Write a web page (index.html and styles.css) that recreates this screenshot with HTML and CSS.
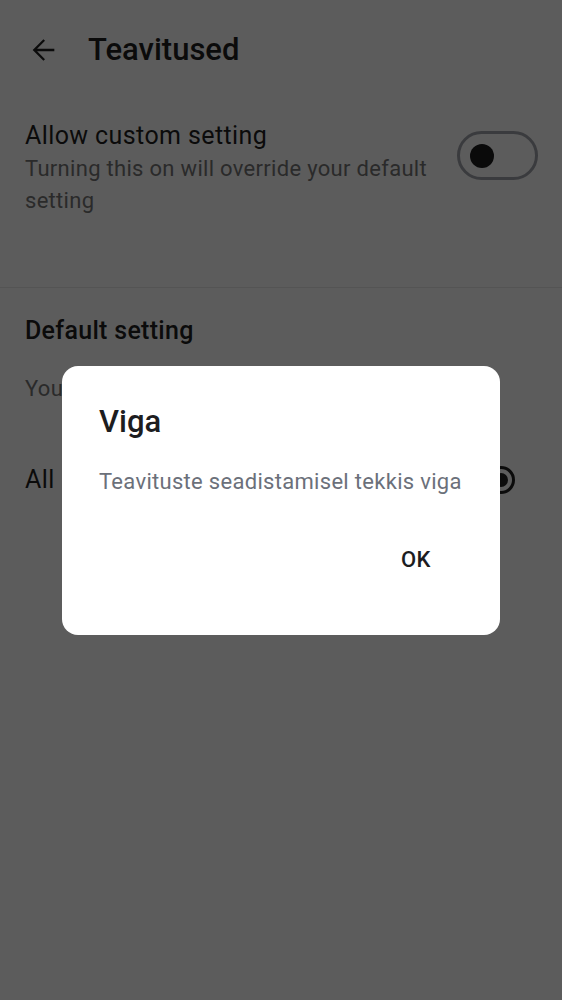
FILE: index.html
```html
<!DOCTYPE html>
<html lang="et">
<head>
<meta charset="utf-8">
<link rel="stylesheet" href="styles.css">
</head>
<body>
<div class="screen">
  <header class="topbar">
    <svg class="back" width="34" height="34" viewBox="0 0 24 24"><path d="M20 11.1H7.83l5.59-5.59L12.3 4.4 4.7 12l7.6 7.6 1.12-1.11-5.59-5.59H20v-1.8z" fill="#1f1f1f"/></svg>
    <h1 class="title">Teavitused</h1>
  </header>

  <section class="section first">
    <div class="row">
      <div class="texts">
        <div class="label">Allow custom setting</div>
        <div class="sub">Turning this on will override your default setting</div>
      </div>
      <div class="switch"><span class="thumb"></span></div>
    </div>
  </section>

  <section class="section second">
    <div class="label medium">Default setting</div>
    <div class="sub you">You will receive notifications according to this</div>
    <div class="radio-row">
      <div class="label">All notifications</div>
      <span class="radio"><span class="dot"></span></span>
    </div>
  </section>
</div>

<div class="overlay">
  <div class="dialog">
    <h2 class="dlg-title">Viga</h2>
    <p class="dlg-msg">Teavituste seadistamisel tekkis viga</p>
    <div class="actions"><button class="ok">OK</button></div>
  </div>
</div>
</body>
</html>
```

FILE: styles.css
```css
* { box-sizing: border-box; }
html, body { margin: 0; padding: 0; }
body {
  width: 562px;
  height: 1000px;
  background: #ffffff;
  font-family: Roboto, "Noto Sans", sans-serif;
  color: #1f1f1f;
  overflow: hidden;
}
.screen { height: 1000px; }
.topbar {
  height: 100px;
  display: flex;
  align-items: center;
  padding: 0 0 0 26px;
}
.back { width: 34px; height: 34px; }
.title {
  margin: 0 0 0 28px;
  font-size: 31px;
  font-weight: 500;
  line-height: 36px;
}
.section { padding: 0 25px; }
.first {
  padding-top: 21px;
  padding-bottom: 70px;
  border-bottom: 1px solid #e8e8e8;
}
.row {
  display: flex;
  align-items: flex-start;
  justify-content: space-between;
}
.texts { width: 415px; }
.label {
  font-size: 25px;
  line-height: 30px;
  letter-spacing: 0.4px;
  color: #1f1f1f;
}
.label.medium { font-weight: 500; letter-spacing: 0.3px; }
.sub {
  margin-top: 2px;
  font-size: 22px;
  line-height: 32px;
  letter-spacing: 0.3px;
  color: #767676;
}
.switch {
  margin-top: 10px;
  margin-right: -1px;
  width: 81px;
  height: 49px;
  border: 3px solid #a2a4ab;
  border-radius: 25px;
  display: flex;
  align-items: center;
  padding-left: 10px;
}
.thumb {
  width: 24px;
  height: 24px;
  border-radius: 50%;
  background: #1c1c1e;
}
.second { padding-top: 28px; }
.you { margin-top: 27px; white-space: nowrap; }
.radio-row {
  margin-top: 51px;
  height: 48px;
  display: flex;
  align-items: center;
  justify-content: space-between;
}
.radio {
  width: 28px;
  height: 28px;
  border: 3px solid #1f1f1f;
  border-radius: 50%;
  display: flex;
  align-items: center;
  justify-content: center;
  margin-right: 22px;
}
.dot {
  width: 14px;
  height: 14px;
  border-radius: 50%;
  background: #1f1f1f;
}
.overlay {
  position: fixed;
  inset: 0;
  background: rgba(0, 0, 0, 0.64);
  display: flex;
  align-items: center;
  justify-content: center;
}
.dialog {
  width: 438px;
  height: 269px;
  background: #ffffff;
  border-radius: 16px;
  padding: 38px 37px 0 37px;
}
.dlg-title {
  margin: 0;
  font-size: 31px;
  font-weight: 500;
  line-height: 36px;
  color: #1d1d1f;
}
.dlg-msg {
  margin: 28px 0 0 0;
  font-size: 22px;
  line-height: 28px;
  letter-spacing: 0.3px;
  color: #6b707a;
  white-space: nowrap;
}
.actions {
  margin-top: 44px;
  display: flex;
  justify-content: flex-end;
  padding-right: 20px;
}
.ok {
  border: 0;
  background: transparent;
  font-family: Roboto, "Noto Sans", sans-serif;
  font-size: 22px;
  font-weight: 500;
  line-height: 40px;
  height: 40px;
  padding: 0 12px;
  color: #1d1d1f;
  letter-spacing: 0.5px;
}
```
